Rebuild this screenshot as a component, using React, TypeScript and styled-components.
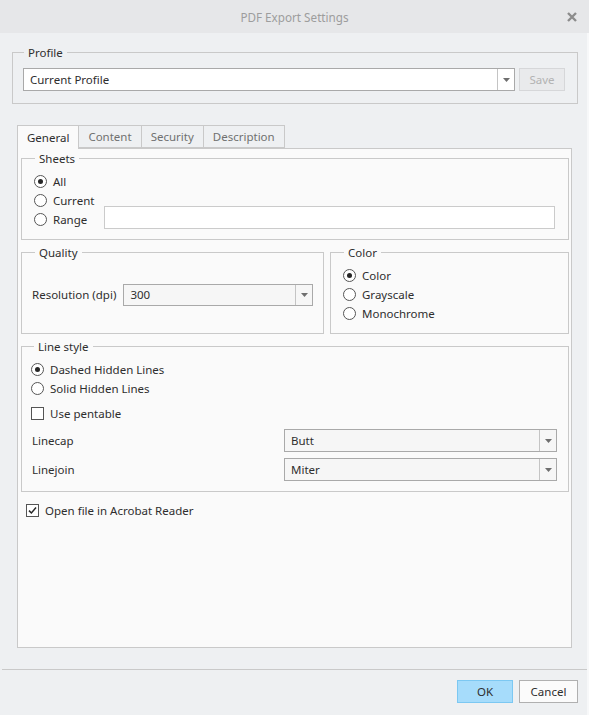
import React from 'react';
import styled, { createGlobalStyle } from 'styled-components';

const GlobalStyle = createGlobalStyle`
  html, body {
    margin: 0;
    padding: 0;
    background: #eef0f2;
  }
  body {
    font-family: "Noto Sans", "Open Sans", sans-serif;
    font-size: 11.5px;
    color: #2e2e2e;
  }
`;

const Window = styled.div`
  width: 589px;
  height: 715px;
  box-sizing: border-box;
  background: #eef0f2;
  box-shadow: inset -2px 0 0 #f7f8f9;
  display: flex;
  flex-direction: column;
`;

const TitleBar = styled.div`
  height: 33px;
  flex: none;
  background: #e6e7e9;
  display: grid;
  grid-template-columns: 1fr auto 1fr;
  align-items: center;
  color: #9d9d9d;
  font-size: 11.7px;
`;

const Title = styled.span`
  grid-column: 2;
`;

const CloseButton = styled.button`
  grid-column: 3;
  justify-self: end;
  margin-right: 10px;
  width: 14px;
  height: 14px;
  padding: 0;
  border: 0;
  background: none;
  display: flex;
  align-items: center;
  justify-content: center;
`;

const Group = styled.fieldset<{ $pad: string }>`
  margin: 0;
  min-width: 0;
  border: 1px solid #c9c9c9;
  padding: ${p => p.$pad};
`;

const Legend = styled.legend<{ $indent?: number }>`
  padding: 2px 4px 0;
  margin-left: ${p => p.$indent ?? 1}px;
  line-height: 16px;
  color: #2e2e2e;
`;

const ProfileGroup = styled(Group)`
  margin: 10px 0 0 12px;
  width: 566px;
  box-sizing: border-box;
`;

const ProfileRow = styled.div`
  display: flex;
  gap: 4px;
`;

const Combo = styled.div<{ $width?: number; $height?: number; $bg?: string }>`
  ${p => (p.$width ? `width: ${p.$width}px; flex: none;` : 'flex: 1;')}
  height: ${p => p.$height ?? 23}px;
  box-sizing: border-box;
  border: 1px solid #a9a9a9;
  background: ${p => p.$bg ?? '#fff'};
  display: flex;
  align-items: stretch;
`;

const ComboText = styled.span`
  flex: 1;
  display: flex;
  align-items: center;
  padding-left: 6px;
`;

const ComboArrow = styled.span`
  width: 16px;
  border-left: 1px solid #c4c4c4;
  display: flex;
  align-items: center;
  justify-content: center;
`;

const Button = styled.button<{ $variant?: 'primary' | 'disabled' }>`
  height: 23px;
  box-sizing: border-box;
  padding: 0;
  font-family: inherit;
  font-size: 11.5px;
  border: 1px solid
    ${p => (p.$variant === 'primary' ? '#7cc8f2' : p.$variant === 'disabled' ? '#d6d7d9' : '#b0b0b0')};
  background: ${p => (p.$variant === 'primary' ? '#a6dcfb' : p.$variant === 'disabled' ? '#e9eaec' : '#fbfbfb')};
  color: ${p => (p.$variant === 'disabled' ? '#b3b3b3' : '#2e2e2e')};
`;

const SaveButton = styled(Button)`
  width: 46px;
`;

const TabArea = styled.div`
  margin: 21px 0 0 17px;
  width: 555px;
  display: flex;
  flex-direction: column;
`;

const TabStrip = styled.div`
  display: flex;
  height: 23px;
`;

const Tab = styled.div<{ $active?: boolean }>`
  box-sizing: border-box;
  height: ${p => (p.$active ? 24 : 23)}px;
  padding: 0 9px;
  margin-right: -1px;
  border: 1px solid #c9c9c9;
  border-bottom: ${p => (p.$active ? '0' : '1px solid #c9c9c9')};
  background: ${p => (p.$active ? '#fafafa' : '#eef0f2')};
  color: ${p => (p.$active ? '#2e2e2e' : '#707070')};
  display: flex;
  align-items: center;
  position: relative;
  z-index: ${p => (p.$active ? 1 : 0)};
`;

const Panel = styled.div`
  height: 500px;
  box-sizing: border-box;
  border: 1px solid #c9c9c9;
  background: #fafafa;
  padding: 0 2px 0 3px;
  display: flex;
  flex-direction: column;
  gap: 3px;
`;

const SheetsGrid = styled.div`
  display: grid;
  grid-template-columns: 70px 1fr;
  grid-template-rows: repeat(3, 19px);
`;

const RangeInput = styled.div`
  grid-column: 2;
  grid-row: 2 / 4;
  align-self: end;
  height: 23px;
  box-sizing: border-box;
  border: 1px solid #cbcbcb;
  background: #fff;
`;

const Columns = styled.div`
  display: grid;
  grid-template-columns: 303px 1fr;
  gap: 6px;
`;

const QualityRow = styled.div`
  height: 57px;
  display: flex;
  align-items: center;
  white-space: nowrap;
  gap: 7px;
`;

const Stack = styled.div`
  display: flex;
  flex-direction: column;
`;

const OptionRow = styled.label<{ $top?: number; $left?: number }>`
  height: 19px;
  display: flex;
  align-items: center;
  gap: 6px;
  margin-top: ${p => p.$top ?? 0}px;
  margin-left: ${p => p.$left ?? 0}px;
  white-space: nowrap;
`;

const RadioMark = styled.span<{ $on?: boolean }>`
  width: 13px;
  height: 13px;
  box-sizing: border-box;
  flex: none;
  border: 1px solid #555;
  border-radius: 50%;
  background: #fff;
  display: flex;
  align-items: center;
  justify-content: center;

  &::after {
    content: '';
    width: 5px;
    height: 5px;
    border-radius: 50%;
    background: #262626;
    display: ${p => (p.$on ? 'block' : 'none')};
  }
`;

const CheckMark = styled.span`
  width: 13px;
  height: 13px;
  box-sizing: border-box;
  flex: none;
  border: 1px solid #555;
  background: #fff;
  display: flex;
  align-items: center;
  justify-content: center;
`;

const FieldRow = styled.div<{ $top: number }>`
  display: flex;
  align-items: center;
  justify-content: space-between;
  margin-top: ${p => p.$top}px;
  padding-left: 1px;
`;

const Footer = styled.div`
  margin: 21px 0 0 2px;
  width: 585px;
  box-sizing: border-box;
  border-top: 1px solid #c9c9c9;
  padding: 10px 9px 0 0;
  display: flex;
  justify-content: flex-end;
  gap: 6px;
`;

const OkButton = styled(Button)`
  width: 56px;
`;

const CancelButton = styled(Button)`
  width: 59px;
`;

const Arrow = () => (
  <ComboArrow>
    <svg width="7" height="4" viewBox="0 0 7 4">
      <path d="M0 0h7L3.5 4z" fill="#6e6e6e" />
    </svg>
  </ComboArrow>
);

const Select: React.FC<{ value: string; width?: number; height?: number; bg?: string }> = ({
  value,
  width,
  height,
  bg,
}) => (
  <Combo $width={width} $height={height} $bg={bg}>
    <ComboText>{value}</ComboText>
    <Arrow />
  </Combo>
);

const Radio: React.FC<{ label: string; on?: boolean; top?: number; left?: number }> = ({
  label,
  on,
  top,
  left,
}) => (
  <OptionRow $top={top} $left={left}>
    <RadioMark $on={on} />
    {label}
  </OptionRow>
);

const Check: React.FC<{ label: string; on?: boolean; top?: number; left?: number }> = ({
  label,
  on,
  top,
  left,
}) => (
  <OptionRow $top={top} $left={left}>
    <CheckMark>
      {on && (
        <svg width="9" height="9" viewBox="0 0 9 9">
          <path d="M1 4.6l2.4 2.4L8 1.6" fill="none" stroke="#262626" strokeWidth="1.5" />
        </svg>
      )}
    </CheckMark>
    {label}
  </OptionRow>
);

const App: React.FC = () => (
  <>
    <GlobalStyle />
    <Window>
      <TitleBar>
        <Title>PDF Export Settings</Title>
        <CloseButton aria-label="Close">
          <svg width="10" height="10" viewBox="0 0 10 10">
            <path d="M1 1l8 8M9 1L1 9" stroke="#8c8c8c" strokeWidth="2.4" />
          </svg>
        </CloseButton>
      </TitleBar>

      <ProfileGroup $pad="7px 12px 12px 10px">
        <Legend>Profile</Legend>
        <ProfileRow>
          <Select value="Current Profile" />
          <SaveButton $variant="disabled">Save</SaveButton>
        </ProfileRow>
      </ProfileGroup>

      <TabArea>
        <TabStrip>
          <Tab $active>General</Tab>
          <Tab>Content</Tab>
          <Tab>Security</Tab>
          <Tab>Description</Tab>
        </TabStrip>
        <Panel>
          <Group $pad="5px 13px 10px 12px">
            <Legend>Sheets</Legend>
            <SheetsGrid>
              <Radio label="All" on />
              <span />
              <Radio label="Current" />
              <Radio label="Range" />
              <RangeInput />
            </SheetsGrid>
          </Group>

          <Columns>
            <Group $pad="5px 10px 10px 10px">
              <Legend $indent={3}>Quality</Legend>
              <QualityRow>
                Resolution (dpi)
                <Select value="300" height={22} width={190} bg="#f6f6f6" />
              </QualityRow>
            </Group>
            <Group $pad="5px 10px 10px 12px">
              <Legend>Color</Legend>
              <Stack>
                <Radio label="Color" on />
                <Radio label="Grayscale" />
                <Radio label="Monochrome" />
              </Stack>
            </Group>
          </Columns>

          <Group $pad="5px 11px 10px 9px">
            <Legend $indent={3}>Line style</Legend>
            <Stack>
              <Radio label="Dashed Hidden Lines" on />
              <Radio label="Solid Hidden Lines" />
              <Check label="Use pentable" top={6} />
              <FieldRow $top={6}>
                Linecap
                <Select value="Butt" width={273} bg="#f6f6f6" />
              </FieldRow>
              <FieldRow $top={6}>
                Linejoin
                <Select value="Miter" width={273} bg="#f6f6f6" />
              </FieldRow>
            </Stack>
          </Group>

          <Check label="Open file in Acrobat Reader" on top={6} left={5} />
        </Panel>
      </TabArea>

      <Footer>
        <OkButton $variant="primary">OK</OkButton>
        <CancelButton>Cancel</CancelButton>
      </Footer>
    </Window>
  </>
);

export default App;
